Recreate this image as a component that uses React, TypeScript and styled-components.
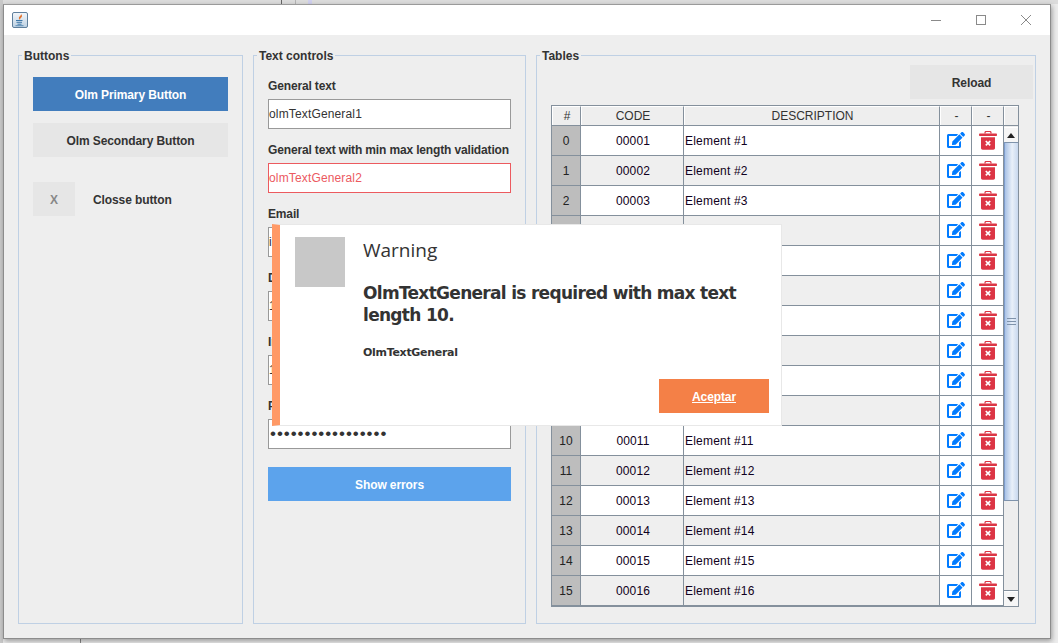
import React from "react";
import styled, { createGlobalStyle } from "styled-components";
import { FaEdit } from "react-icons/fa";

const GlobalStyle = createGlobalStyle`
  html, body {
    margin: 0;
    padding: 0;
    background: #ececec;
    font-family: "Liberation Sans", Arial, sans-serif;
    overflow: hidden;
  }
`;

const rows = Array.from({ length: 16 }, (_, i) => ({
  index: i,
  code: String(i + 1).padStart(5, "0"),
  description: `Element #${i + 1}`,
}));

const fields = [
  { label: "General text", value: "olmTextGeneral1" },
  { label: "General text with min max length validation", value: "olmTextGeneral2", error: true },
  { label: "Email", value: "info@olm.com" },
  { label: "Date", value: "12/12/2020" },
  { label: "Integer", value: "100" },
];

function JavaIcon() {
  return (
    <svg width="16" height="16" viewBox="0 0 16 16">
      <defs>
        <linearGradient id="javaBg" x1="0" y1="0" x2="0" y2="1">
          <stop offset="0" stopColor="#f4f7fa" />
          <stop offset="1" stopColor="#bcd0e2" />
        </linearGradient>
      </defs>
      <rect x="0.5" y="0.5" width="15" height="15" rx="1.5" fill="url(#javaBg)" stroke="#5f7f9c" />
      <path d="M9 2c.6 1.400-2.300 2.600-2.100 4.200.1.800.7 1.400 1.200 1.800-.2-1.100.3-1.700 1.200-2.500C10.200 4.700 10.400 3.200 9 2z" fill="#e2712a" />
      <path d="M4 8.500h6.500M4.500 10.300h5.500M5.500 12.200h4" stroke="#3f78a8" strokeWidth="1" fill="none" />
      <path d="M3.500 13.700h8" stroke="#3f78a8" strokeWidth="0.8" fill="none" />
    </svg>
  );
}

function TrashIcon() {
  return (
    <svg width="18" height="19" viewBox="0 0 18 19">
      <path d="M6 2.500V1.800C6 1 6.600.5 7.400.5h3.200c.8 0 1.400.5 1.400 1.300v.7" fill="none" stroke="#dc3545" strokeWidth="1.200" />
      <rect x="0" y="2.500" width="18" height="2.500" rx="0.8" fill="#dc3545" />
      <path d="M2 6.200h14V17c0 1-.7 1.700-1.700 1.700H3.700C2.700 18.700 2 18 2 17z" fill="#dc3545" />
      <path d="M6.800 10l4.400 4.400M11.200 10l-4.400 4.400" stroke="#fff" strokeWidth="1.700" />
    </svg>
  );
}

export default function App() {
  return (
    <>
      <GlobalStyle />
      <Desktop>
        <Window>
          <TitleBar>
            <JavaIcon />
            <WindowControls>
              <svg width="12" height="12" viewBox="0 0 12 12">
                <path d="M1 6.500h10" stroke="#8a8a8a" strokeWidth="1" />
              </svg>
              <svg width="12" height="12" viewBox="0 0 12 12">
                <rect x="1.500" y="1.500" width="9" height="9" fill="none" stroke="#8a8a8a" />
              </svg>
              <svg width="12" height="12" viewBox="0 0 12 12">
                <path d="M1 1l10 10M11 1L1 11" stroke="#8a8a8a" strokeWidth="1" />
              </svg>
            </WindowControls>
          </TitleBar>

          <Panels>
            <Group>
              <Legend>Buttons</Legend>
              <ButtonsColumn>
                <PrimaryButton>Olm Primary Button</PrimaryButton>
                <SecondaryButton>Olm Secondary Button</SecondaryButton>
                <CloseRow>
                  <CloseButton>X</CloseButton>
                  <CloseLabel>Closse button</CloseLabel>
                </CloseRow>
              </ButtonsColumn>
            </Group>

            <Group>
              <Legend>Text controls</Legend>
              <FieldsColumn>
                {fields.map((f) => (
                  <Field key={f.label}>
                    <FieldLabel>{f.label}</FieldLabel>
                    <TextInput readOnly value={f.value} $error={f.error} />
                  </Field>
                ))}
                <Field>
                  <FieldLabel>Password</FieldLabel>
                  <PasswordInput readOnly type="password" value="12345678901234567" />
                </Field>
                <ShowErrors>Show errors</ShowErrors>
              </FieldsColumn>
            </Group>

            <Group>
              <Legend>Tables</Legend>
              <TablesColumn>
                <ReloadButton>Reload</ReloadButton>
                <TableFrame>
                  <HeaderRow>
                    <HeaderCell>#</HeaderCell>
                    <HeaderCell>CODE</HeaderCell>
                    <HeaderCell>DESCRIPTION</HeaderCell>
                    <HeaderCell>-</HeaderCell>
                    <HeaderCell>-</HeaderCell>
                    <HeaderCell />
                  </HeaderRow>
                  <TableBody>
                    <Rows>
                      {rows.map((r) => (
                        <Row key={r.index} $odd={r.index % 2 === 1}>
                          <IndexCell>{r.index}</IndexCell>
                          <CodeCell>{r.code}</CodeCell>
                          <DescCell>{r.description}</DescCell>
                          <IconCell>
                            <EditIcon size={18} color="#007bff" />
                          </IconCell>
                          <IconCell>
                            <TrashIcon />
                          </IconCell>
                        </Row>
                      ))}
                    </Rows>
                    <ScrollBar>
                      <ScrollArrow>
                        <ArrowUp />
                      </ScrollArrow>
                      <ScrollThumb>
                        <Grip />
                      </ScrollThumb>
                      <ScrollTrack />
                      <ScrollArrow>
                        <ArrowDown />
                      </ScrollArrow>
                    </ScrollBar>
                  </TableBody>
                </TableFrame>
              </TablesColumn>
            </Group>
          </Panels>

          <Dialog>
            <DialogIcon />
            <DialogBody>
              <DialogTitle>Warning</DialogTitle>
              <DialogMessage>OlmTextGeneral is required with max text length 10.</DialogMessage>
              <DialogSource>OlmTextGeneral</DialogSource>
            </DialogBody>
            <AcceptButton>Aceptar</AcceptButton>
          </Dialog>
        </Window>
      </Desktop>
    </>
  );
}

const Desktop = styled.div`
  width: 1058px;
  height: 643px;
  box-sizing: border-box;
  padding: 4px 7px 4px 0;
  display: flex;
  border-left: 3px solid #c9c9c9;
  background:
    linear-gradient(#666666, #666666) 278px 0 / 1px 4px no-repeat,
    linear-gradient(#b4b4b4, #b4b4b4) 292px 0 / 1px 4px no-repeat,
    linear-gradient(#d0d0ee, #d0d0ee) 305px 0 / 4px 4px no-repeat,
    linear-gradient(#888888, #888888) 77px 638px / 1px 5px no-repeat,
    linear-gradient(#dcdcdc, #dcdcdc) 0 0 / 100% 4px no-repeat,
    #ececec;
`;

const Window = styled.div`
  position: relative;
  flex: 1;
  display: flex;
  flex-direction: column;
  background: #eeeeee;
  border: 1px solid #8c8c8c;
  border-top-color: #9a9a9a;
  box-shadow: 1px 2px 5px rgba(0, 0, 0, 0.35);
`;

const TitleBar = styled.div`
  height: 30px;
  flex: none;
  background: #ffffff;
  display: flex;
  align-items: center;
  justify-content: space-between;
  padding: 0 18px 0 8px;
`;

const WindowControls = styled.div`
  display: flex;
  gap: 33px;
  align-items: center;
`;

const Panels = styled.div`
  flex: 1;
  display: grid;
  grid-template-columns: 225px 273px 500px;
  gap: 10px;
  padding: 13px 14px 14px;
  min-height: 0;
`;

const Group = styled.fieldset`
  margin: 0;
  padding: 0;
  min-width: 0;
  border: 1px solid #bfd0e4;
`;

const Legend = styled.legend`
  margin-left: 3px;
  padding: 1px 2px 0;
  font-size: 12px;
  line-height: 14px;
  font-weight: bold;
  color: #333333;
`;

const ButtonsColumn = styled.div`
  display: flex;
  flex-direction: column;
  gap: 12px;
  padding: 14px 14px 0;
`;

const FlatButton = styled.button`
  height: 34px;
  border: none;
  padding: 1px 0 0;
  font-family: inherit;
  font-size: 12px;
  font-weight: bold;
  letter-spacing: -0.1px;
`;

const PrimaryButton = styled(FlatButton)`
  background: #427dbd;
  color: #ffffff;
`;

const SecondaryButton = styled(FlatButton)`
  background: #e6e6e6;
  color: #333333;
`;

const CloseRow = styled.div`
  display: flex;
  align-items: center;
  gap: 18px;
  margin-top: 13px;
`;

const CloseButton = styled(FlatButton)`
  width: 42px;
  background: #e6e6e6;
  color: #888888;
`;

const CloseLabel = styled.span`
  padding-top: 1px;
  font-size: 12px;
  font-weight: bold;
  letter-spacing: -0.1px;
  color: #333333;
`;

const FieldsColumn = styled.div`
  display: flex;
  flex-direction: column;
  gap: 14px;
  padding: 16px 14px 0;
`;

const Field = styled.div`
  display: flex;
  flex-direction: column;
  gap: 6px;
`;

const FieldLabel = styled.label`
  font-size: 12px;
  line-height: 14px;
  font-weight: bold;
  letter-spacing: -0.15px;
  white-space: nowrap;
  color: #333333;
`;

const TextInput = styled.input<{ $error?: boolean }>`
  height: 30px;
  box-sizing: border-box;
  width: 100%;
  padding: 0;
  outline: none;
  background: #ffffff;
  font-family: inherit;
  font-size: 12px;
  letter-spacing: 0.15px;
  border: 1px solid ${(p) => (p.$error ? "#ec5a5f" : "#999999")};
  color: ${(p) => (p.$error ? "#ec5a5f" : "#333333")};
`;

const PasswordInput = styled(TextInput)`
  padding-left: 1px;
  font-size: 17px;
  letter-spacing: 0.95px;
`;

const ShowErrors = styled(FlatButton)`
  margin-top: 4px;
  background: #5ca3ec;
  color: #ffffff;
`;

const TablesColumn = styled.div`
  display: flex;
  flex-direction: column;
  gap: 6px;
  padding: 2px 2px 0 14px;
`;

const ReloadButton = styled(FlatButton)`
  align-self: flex-end;
  width: 123px;
  background: #e6e6e6;
  color: #333333;
`;

const TableFrame = styled.div`
  width: 468px;
  height: 502px;
  box-sizing: border-box;
  border: 1px solid #84909c;
  display: flex;
  flex-direction: column;
  font-size: 12px;
  overflow: hidden;
`;

const columns = "29px 103px 256px 32px 32px";

const HeaderRow = styled.div`
  display: grid;
  grid-template-columns: ${columns} 1fr;
  height: 19px;
  flex: none;
  border-bottom: 1px solid #84909c;
  background: #eeeeee;
`;

const HeaderCell = styled.div`
  display: flex;
  align-items: center;
  justify-content: center;
  padding-left: 1px;
  border-right: 1px solid #84909c;
  border-top: 1px solid #ffffff;
  border-left: 1px solid #ffffff;
  color: #333333;
  &:last-child {
    border-right: none;
  }
`;

const TableBody = styled.div`
  flex: 1;
  display: flex;
  min-height: 0;
`;

const Rows = styled.div`
  width: 452px;
  flex: none;
`;

const Row = styled.div<{ $odd: boolean }>`
  display: grid;
  grid-template-columns: ${columns};
  height: 30px;
  box-sizing: border-box;
  border-bottom: 1px solid #84909c;
  background: ${(p) => (p.$odd ? "#efefef" : "#ffffff")};
  color: #100020;
`;

const BodyCell = styled.div`
  display: flex;
  align-items: center;
  border-right: 1px solid #84909c;
`;

const IndexCell = styled(BodyCell)`
  justify-content: center;
  background: #bdbdbd;
  color: #222222;
`;

const CodeCell = styled(BodyCell)`
  justify-content: center;
  padding-left: 2px;
  letter-spacing: 0.1px;
`;

const DescCell = styled(BodyCell)`
  padding-left: 1px;
  letter-spacing: 0.2px;
`;

const IconCell = styled(BodyCell)`
  justify-content: center;
  background: #ffffff;
`;

const EditIcon = styled(FaEdit)`
  margin-top: -1px;
`;

const ScrollBar = styled.div`
  flex: 1;
  display: flex;
  flex-direction: column;
  background: #eeeeee;
  padding-top: 1px;
`;

const ScrollArrow = styled.div`
  height: 15px;
  flex: none;
  display: flex;
  align-items: center;
  justify-content: center;
  background: #f6f6f6;
  border-top: 1px solid #ffffff;
  box-sizing: border-box;
`;

const ArrowUp = styled.div`
  border-left: 4px solid transparent;
  border-right: 4px solid transparent;
  border-bottom: 5px solid #222222;
`;

const ArrowDown = styled.div`
  border-left: 4px solid transparent;
  border-right: 4px solid transparent;
  border-top: 5px solid #222222;
`;

const ScrollThumb = styled.div`
  height: 359px;
  flex: none;
  display: flex;
  align-items: center;
  justify-content: center;
  background: linear-gradient(to right, #a9c2e6, #e9f0f9 55%, #c8d8ee);
  border-left: 1px solid #7d9ccc;
  border-bottom: 1px solid #7f93ab;
  border-top: 1px solid #7f93ab;
  box-sizing: border-box;
`;

const Grip = styled.div`
  width: 9px;
  height: 5px;
  border-top: 1px solid #7f93ab;
  border-bottom: 1px solid #7f93ab;
  background: linear-gradient(#7f93ab, #7f93ab) center / 100% 1px no-repeat;
`;

const ScrollTrack = styled.div`
  flex: 1;
  border-bottom: 1px solid #84909c;
`;

const Dialog = styled.div`
  position: absolute;
  left: 268px;
  top: 219px;
  width: 510px;
  height: 202px;
  box-sizing: border-box;
  background: #ffffff;
  border: 1px solid #e8e8e8;
  border-left: 8px solid #ff9966;
  display: flex;
  gap: 18px;
  padding: 12px 0 0 15px;
`;

const DialogIcon = styled.div`
  width: 50px;
  height: 50px;
  flex: none;
  background: #c8c8c8;
`;

const DialogBody = styled.div`
  display: flex;
  flex-direction: column;
  width: 395px;
`;

const DialogTitle = styled.div`
  font-family: "Open Sans", sans-serif;
  font-size: 19px;
  line-height: 26px;
  color: #333333;
`;

const DialogMessage = styled.div`
  margin-top: 19px;
  font-family: "DejaVu Sans", sans-serif;
  font-size: 17px;
  line-height: 22px;
  font-weight: bold;
  letter-spacing: -0.7px;
  color: #333333;
`;

const DialogSource = styled.div`
  margin-top: 20px;
  font-family: "DejaVu Sans", sans-serif;
  font-size: 11px;
  line-height: 14px;
  font-weight: bold;
  letter-spacing: -0.3px;
  color: #333333;
`;

const AcceptButton = styled(FlatButton)`
  position: absolute;
  right: 12px;
  bottom: 12px;
  width: 110px;
  background: #f48047;
  color: #ffffff;
  text-decoration: underline;
`;
